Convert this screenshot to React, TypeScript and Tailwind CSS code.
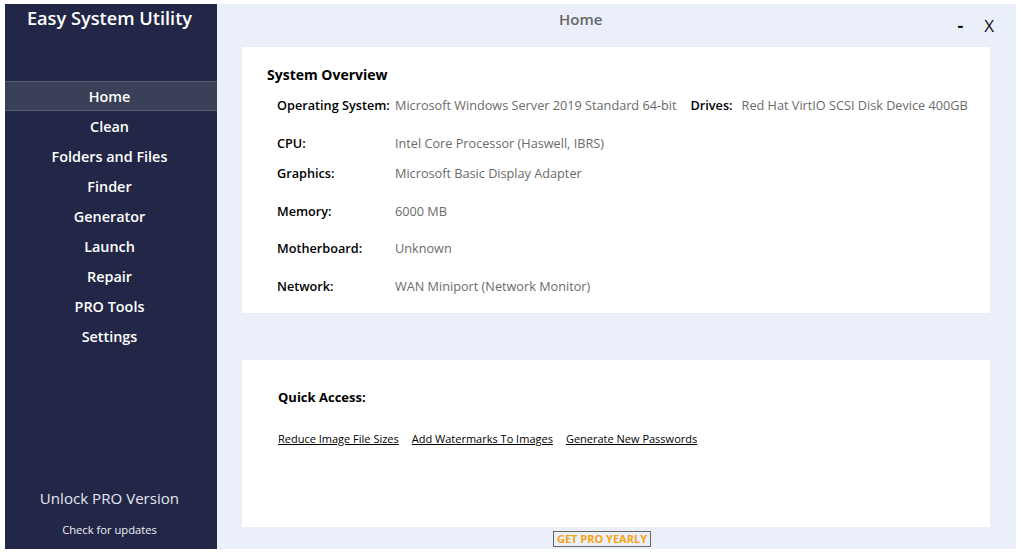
import React from "react";

const rows: [string, string][] = [
  ["CPU:", "Intel Core Processor (Haswell, IBRS)"],
  ["Graphics:", "Microsoft Basic Display Adapter"],
  ["Memory:", "6000 MB"],
  ["Motherboard:", "Unknown"],
  ["Network:", "WAN Miniport (Network Monitor)"],
];

const nav = ["Home", "Clean", "Folders and Files", "Finder", "Generator", "Launch", "Repair", "PRO Tools", "Settings"];

export default function App() {
  return (
    <div
      className="w-[1019px] h-[553px] bg-white pt-[4px] pl-[5px] pr-[3px] pb-[4px] flex overflow-hidden"
      style={{ fontFamily: '"Open Sans", "Noto Sans", sans-serif' }}
    >
      <aside className="w-[212px] bg-[#232747] flex flex-col text-white">
        <div className="h-[77px] text-center pr-[3px] pt-[1px] text-[18.2px] font-semibold">Easy System Utility</div>
        <nav className="flex flex-col">
          {nav.map((n, i) => (
            <div
              key={n}
              className={
                i === 0
                  ? "h-[30px] pr-[3px] pt-[2px] flex items-center justify-center text-[14.4px] font-semibold bg-[#3a4058] border-y border-[#5b6070]"
                  : "h-[30px] pr-[3px] pt-[2px] flex items-center justify-center text-[14.4px] font-semibold"
              }
            >
              {n}
            </div>
          ))}
        </nav>
        <div className="flex-1" />
        <div className="text-center pr-[3px] text-[15.1px] text-[#e4e6f0] mb-[13px]">Unlock PRO Version</div>
        <div className="text-center pr-[3px] text-[11.2px] text-[#f0f0f6] mb-[10px]">Check for updates</div>
      </aside>
      <main className="flex-1 bg-[#eaeff9] flex flex-col">
        <div className="h-[43px] relative">
          <div className="absolute left-[342px] top-[4px] text-[15px] font-semibold text-[#666]">Home</div>
          <div className="absolute right-[22px] top-[12px] flex items-end gap-[21px] text-[#111]">
            <span className="text-[18px] font-bold leading-none">-</span>
            <span className="text-[17px] leading-none">X</span>
          </div>
        </div>
        <section className="ml-[25px] w-[748px] h-[266px] bg-white pl-[25px] pt-[17px]">
          <h2 className="text-[14px] font-bold text-black">System Overview</h2>
          <div className="pl-[10px] mt-[11px] text-[12.7px]">
            <div className="flex h-[20px] items-center">
              <span className="w-[118px] font-semibold text-black">Operating System:</span>
              <span className="text-[#6b6b6b]">Microsoft Windows Server 2019 Standard 64-bit</span>
              <span className="ml-[14px] font-semibold text-black">Drives:</span>
              <span className="ml-[9px] text-[#6b6b6b]">Red Hat VirtIO SCSI Disk Device 400GB</span>
            </div>
            <div className="mt-[18px] flex flex-col">
              {rows.map(([k, v], i) => (
                <div key={k} className={i === 0 ? "flex h-[20px] items-center" : i === 1 ? "flex h-[20px] items-center mt-[10px]" : "flex h-[20px] items-center mt-[17.5px]"}>
                  <span className="w-[118px] font-semibold text-black">{k}</span>
                  <span className="text-[#6b6b6b]">{v}</span>
                </div>
              ))}
            </div>
          </div>
        </section>
        <section className="ml-[25px] mt-[47px] w-[748px] h-[167px] bg-white pl-[36px] pt-[28px]">
          <h3 className="text-[13px] font-bold text-black">Quick Access:</h3>
          <div className="mt-[23px] flex gap-[13px] text-[11px] text-black underline">
            <span>Reduce Image File Sizes</span>
            <span>Add Watermarks To Images</span>
            <span>Generate New Passwords</span>
          </div>
        </section>
        <div className="flex-1 flex items-start justify-center pr-[26px]">
          <div className="mt-[4px] ml-[-3px] border border-[#666] px-[3px] h-[16px] flex items-center text-[11px] font-bold text-[#f6a313]">GET PRO YEARLY</div>
        </div>
      </main>
    </div>
  );
}
